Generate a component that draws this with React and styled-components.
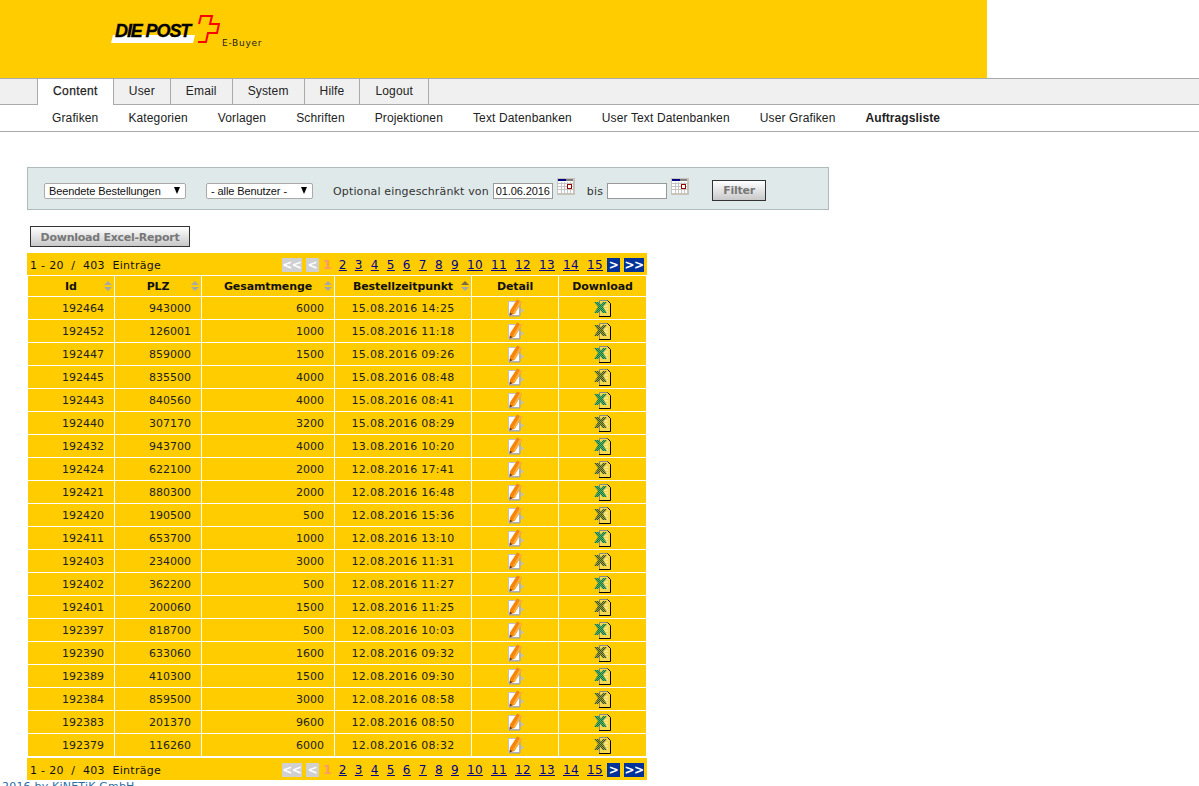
import React from 'react'
import styled, { createGlobalStyle } from 'styled-components'

const tabs = ['Content', 'User', 'Email', 'System', 'Hilfe', 'Logout']
const subs = ['Grafiken', 'Kategorien', 'Vorlagen', 'Schriften', 'Projektionen', 'Text Datenbanken', 'User Text Datenbanken', 'User Grafiken', 'Auftragsliste']
const pages = [2, 3, 4, 5, 6, 7, 8, 9, 10, 11, 12, 13, 14, 15]

const rows = [
    ['192464', '943000', '6000', '15.08.2016 14:25', 1],
    ['192452', '126001', '1000', '15.08.2016 11:18', 0],
    ['192447', '859000', '1500', '15.08.2016 09:26', 1],
    ['192445', '835500', '4000', '15.08.2016 08:48', 0],
    ['192443', '840560', '4000', '15.08.2016 08:41', 1],
    ['192440', '307170', '3200', '15.08.2016 08:29', 0],
    ['192432', '943700', '4000', '13.08.2016 10:20', 1],
    ['192424', '622100', '2000', '12.08.2016 17:41', 0],
    ['192421', '880300', '2000', '12.08.2016 16:48', 1],
    ['192420', '190500', '500', '12.08.2016 15:36', 0],
    ['192411', '653700', '1000', '12.08.2016 13:10', 1],
    ['192403', '234000', '3000', '12.08.2016 11:31', 0],
    ['192402', '362200', '500', '12.08.2016 11:27', 1],
    ['192401', '200060', '1500', '12.08.2016 11:25', 0],
    ['192397', '818700', '500', '12.08.2016 10:03', 1],
    ['192390', '633060', '1600', '12.08.2016 09:32', 0],
    ['192389', '410300', '1500', '12.08.2016 09:30', 1],
    ['192384', '859500', '3000', '12.08.2016 08:58', 0],
    ['192383', '201370', '9600', '12.08.2016 08:50', 1],
    ['192379', '116260', '6000', '12.08.2016 08:32', 0],
]

const Logo = () => (
    <svg width="112" height="34" viewBox="0 0 112 34">
        <polygon points="2,21 84,21 82,29 0,29" fill="#fff" />
        <path d="M88 10l2-8h11l-2 8h9l-2 9h-9l-2 9h-8" fill="none" stroke="#f00" strokeWidth="2" />
    </svg>
)

const Calendar = () => (
    <svg width="18" height="17" viewBox="0 0 18 17">
        <rect width="18" height="17" fill="#c8c4bc" />
        <rect x="1" y="1" width="15" height="14" fill="#fff" />
        <path d="M1 5.500h15M1 8.500h15M1 11.500h15M4.500 4v11M7.500 4v11M10.500 4v11M13.500 4v11" stroke="#c4c4c4" />
        <rect x="1" y="1" width="8" height="2" fill="#000080" />
        <rect x="9" y="1" width="7" height="2" fill="#808080" />
        <rect x="10.500" y="6.500" width="4" height="4" fill="#fff" stroke="#900" />
    </svg>
)

const DetailIcon = () => (
    <svg width="20" height="18" viewBox="0 0 20 18">
        <path d="M3.500 2.500h11v14h-11z" fill="#fff" stroke="#c0c0c8" />
        <path d="M4 17h11V3" fill="none" stroke="#a0a0a8" />
        <path d="M16 9l3 2.500-3 2.500z" fill="#b8c0d0" />
        <path d="M12 .5l5 2.500-7.500 12-5 1.500.5-5z" fill="#f5860a" />
        <path d="M15 1.500l2 1.500-7.500 12-1.500-1z" fill="#fbb040" />
        <path d="M4.500 16.500l.4-3 2.400 1.800z" fill="#5a3a20" />
    </svg>
)

const ExcelIcon = ({ green }) => {
    const id = green ? 'xlsGreen' : 'xlsDark'
    return (
        <svg width="18" height="17" viewBox="0 0 18 17">
            <defs>
                <pattern id={id} width="2" height="2" patternUnits="userSpaceOnUse">
                    <rect width="2" height="2" fill={green ? '#0a8030' : '#2a5a30'} />
                    <rect width="1" height="1" fill={green ? '#6aa878' : '#b09830'} />
                    <rect x="1" y="1" width="1" height="1" fill={green ? '#6aa878' : '#b09830'} />
                </pattern>
            </defs>
            <path d="M5.500 16V.5h8l3 3V16" fill="#f4d850" />
            <path d="M5.500 16V.500h8" fill="none" stroke="#8a8a8a" />
            <path d="M13.500.5l3 3V16.500H5" fill="none" stroke="#000" />
            <path d="M8 6h6M8 9h6M8 12h6" stroke="#fff3b0" />
            <path d="M0 2h5l2 2.500L9 2h4L9 7l4 6H8.500L6.500 10 4 13H0l4-6z" fill={`url(#${id})`} />
        </svg>
    )
}

const Pager = () => (
    <PagerBar>
        <Count>1 - 20 &nbsp;/&nbsp; 403 &nbsp;Einträge</Count>
        <PageLinks>
            <PageBox $wide>&lt;&lt;</PageBox>
            <PageBox>&lt;</PageBox>
            <Current>1</Current>
            {pages.map(p => <PageLink key={p} href="#">{p}</PageLink>)}
            <PageBox $active>&gt;</PageBox>
            <PageBox $active $wide>&gt;&gt;</PageBox>
        </PageLinks>
    </PagerBar>
)

const App = () => {
    return (
        <>
            <GlobalStyle />
            <Header>
                <Brand>
                    <Logo />
                    <LogoWord>DIE POST</LogoWord>
                    <BrandName>E-Buyer</BrandName>
                </Brand>
            </Header>
            <TabBar>
                {tabs.map((t, i) => <Tab key={t} $active={i === 0}>{t}</Tab>)}
            </TabBar>
            <SubBar>
                {subs.map((s, i) => <SubLink key={s} $active={i === subs.length - 1}>{s}</SubLink>)}
            </SubBar>
            <Main>
                <FilterBox>
                    <Select $w={142}>Beendete Bestellungen</Select>
                    <Select $w={107}>- alle Benutzer -</Select>
                    <FilterLabel>Optional eingeschränkt von</FilterLabel>
                    <DateInput defaultValue="01.06.2016" />
                    <CalendarSlot><Calendar /></CalendarSlot>
                    <BisLabel>bis</BisLabel>
                    <DateInput />
                    <CalendarSlot><Calendar /></CalendarSlot>
                    <FilterButton>Filter</FilterButton>
                </FilterBox>
                <ReportButton>Download Excel-Report</ReportButton>
                <Pager />
                <Table>
                    <thead>
                        <tr>
                            <HeadCell $w={86}>Id<Sort /></HeadCell>
                            <HeadCell $w={86}>PLZ<Sort /></HeadCell>
                            <HeadCell $w={132}>Gesamtmenge<Sort /></HeadCell>
                            <HeadCell $w={136}>Bestellzeitpunkt<Sort $active /></HeadCell>
                            <HeadCell $w={86}>Detail</HeadCell>
                            <HeadCell $w={87}>Download</HeadCell>
                        </tr>
                    </thead>
                    <tbody>
                        {rows.map(r => (
                            <tr key={r[0]}>
                                <Cell>{r[0]}</Cell>
                                <Cell>{r[1]}</Cell>
                                <Cell>{r[2]}</Cell>
                                <Cell $center>{r[3]}</Cell>
                                <Cell $center><DetailIcon /></Cell>
                                <Cell $center><ExcelIcon green={r[4] === 1} /></Cell>
                            </tr>
                        ))}
                    </tbody>
                </Table>
                <Pager />
            </Main>
            <Footer>2016 by KiNETiK GmbH</Footer>
        </>
    )
}

export default App

const GlobalStyle = createGlobalStyle`
html, body {
    margin: 0;
    padding: 0;
    background: #fff;
    height: 786px;
    overflow: hidden;
}
body {
    font-family: "DejaVu Sans", Verdana, sans-serif;
    font-size: 11px;
}
`
const Header = styled.div`
width: 987px;
height: 78px;
background-color: #ffcc00;
`
const Brand = styled.div`
position: relative;
width: 160px;
height: 78px;
margin-left: 111px;
svg {
    position: absolute;
    left: 0;
    top: 14px;
}
`
const LogoWord = styled.div`
position: absolute;
left: 4px;
top: 21px;
font-family: "Liberation Sans", Arial, sans-serif;
font-weight: bold;
font-style: italic;
font-size: 18px;
letter-spacing: -1.1px;
-webkit-text-stroke: 0.3px #000;
color: #000;
`
const BrandName = styled.div`
position: absolute;
left: 111px;
top: 38px;
font-size: 9px;
letter-spacing: 0.75px;
color: #222;
`
const TabBar = styled.div`
display: flex;
height: 25px;
padding-left: 37px;
background-color: #f0f0f0;
border-top: 1px solid #aaa;
border-bottom: 1px solid #aaa;
`
const Tab = styled.div`
height: ${p => (p.$active ? '26px' : '25px')};
padding: 0 15px 2px;
display: flex;
align-items: center;
justify-content: center;
box-sizing: border-box;
background-color: ${p => (p.$active ? '#fff' : '#f0f0f0')};
border-right: 1px solid #aaa;
border-left: ${p => (p.$active ? '1px solid #aaa' : '0')};
font-family: "Liberation Sans", Arial, sans-serif;
font-size: 12px;
letter-spacing: ${p => (p.$active ? '0.4px' : '0.16px')};
color: #222;
-webkit-text-stroke: ${p => (p.$active ? '0.25px #222' : '0')};
`
const SubBar = styled.div`
display: flex;
gap: 30px;
height: 26px;
align-items: center;
padding-left: 52px;
border-bottom: 1px solid #aaa;
`
const SubLink = styled.div`
font-family: "Liberation Sans", Arial, sans-serif;
font-size: 12px;
letter-spacing: ${p => (p.$active ? '0.1px' : '0.13px')};
color: #222;
font-weight: ${p => (p.$active ? 'bold' : 'normal')};
`
const Main = styled.div`
width: 802px;
padding: 35px 0 0 27px;
`
const FilterBox = styled.div`
box-sizing: border-box;
width: 802px;
height: 43px;
display: flex;
align-items: center;
padding: 5px 0 0 16px;
background-color: #dfe9e9;
border: 1px solid #b0bcbc;
`
const Select = styled.div`
box-sizing: border-box;
position: relative;
width: ${p => p.$w}px;
height: 16px;
margin-right: 20px;
padding-left: 4px;
line-height: 14px;
font-family: "Liberation Sans", Arial, sans-serif;
font-size: 11px;
letter-spacing: -0.1px;
background: #fff;
border: 1px solid #aaa;
border-radius: 2px;
color: #111;
&::after {
    content: "";
    position: absolute;
    right: 5px;
    top: 3px;
    border-left: 3.5px solid transparent;
    border-right: 3.5px solid transparent;
    border-top: 7px solid #000;
}
`
const FilterLabel = styled.span`
font-size: 11px;
letter-spacing: 0.15px;
color: #333;
margin-right: 4px;
`
const BisLabel = styled.span`
font-size: 11px;
letter-spacing: 0.15px;
color: #333;
margin: 0 4px 0 12px;
`
const DateInput = styled.input`
box-sizing: border-box;
width: 60px;
height: 16px;
padding: 0 2px;
border: 1px solid #999;
background: #fff;
outline: none;
font-family: "Liberation Sans", Arial, sans-serif;
font-size: 11px;
letter-spacing: -0.1px;
color: #111;
`
const CalendarSlot = styled.div`
margin: -10px 0 0 4px;
height: 17px;
svg { display: block; }
`
const GreyButton = styled.button`
box-sizing: border-box;
padding: 0;
background: linear-gradient(#fff, #c8c8c8);
border: 1px solid #333;
font-family: "DejaVu Sans", Verdana, sans-serif;
font-size: 11px;
font-weight: bold;
letter-spacing: -0.25px;
color: #777;
`
const FilterButton = styled(GreyButton)`
width: 54px;
height: 21px;
margin: -2px 0 0 23px;
`
const ReportButton = styled(GreyButton)`
display: block;
width: 160px;
height: 21px;
padding-top: 1px;
margin: 16px 0 6px 3px;
`
const PagerBar = styled.div`
box-sizing: border-box;
width: 620px;
height: 22px;
display: flex;
align-items: center;
justify-content: space-between;
padding: 2px 3px 0;
background-color: #ffcc00;
`
const Count = styled.span`
color: #111;
letter-spacing: 0.3px;
`
const PageLinks = styled.div`
display: flex;
align-items: center;
gap: 4px;
margin-top: -1px;
`
const PageBox = styled.span`
box-sizing: border-box;
width: ${p => (p.$wide ? '20px' : '13px')};
height: 14px;
display: flex;
align-items: center;
justify-content: center;
font-weight: bold;
font-size: 12px;
letter-spacing: -0.5px;
color: #fff;
background-color: ${p => (p.$active ? '#003399' : '#d0d0d0')};
`
const Current = styled.span`
width: 8px;
font-weight: bold;
font-size: 13px;
text-align: center;
color: #ff9966;
`
const PageLink = styled.a`
margin-left: 4px;
font-size: 12px;
letter-spacing: 0.37px;
color: #00008b;
`
const Table = styled.table`
border-collapse: separate;
border-spacing: 1px;
table-layout: fixed;
width: 620px;
background-color: #fff;
margin: 0 0 1px;
`
const HeadCell = styled.th`
position: relative;
width: ${p => p.$w}px;
height: 20px;
padding: 0;
box-sizing: border-box;
background-color: #ffcc00;
font-size: 11px;
font-weight: bold;
letter-spacing: -0.1px;
color: #111;
text-align: center;
`
const Sort = styled.span`
position: absolute;
right: 2px;
top: 5px;
width: 0;
height: 0;
border-left: 4px solid transparent;
border-right: 4px solid transparent;
border-bottom: 4px solid ${p => (p.$active ? '#776a40' : '#a8a8a8')};
&::after {
    content: "";
    position: absolute;
    left: -4px;
    top: 6px;
    border-left: 4px solid transparent;
    border-right: 4px solid transparent;
    border-top: 4px solid #a8a8a8;
}
`
const Cell = styled.td`
height: 22px;
padding: 0 10px 0 0;
background-color: #ffcc00;
font-size: 11px;
letter-spacing: 0;
color: #222;
text-align: ${p => (p.$center ? 'center' : 'right')};
${p => p.$center && 'padding: 0; letter-spacing: 0.3px;'}
svg {
    display: block;
    margin: 0 auto;
}
`
const Footer = styled.div`
padding-left: 2px;
font-size: 11px;
letter-spacing: 0.2px;
color: #2a6ea8;
`
